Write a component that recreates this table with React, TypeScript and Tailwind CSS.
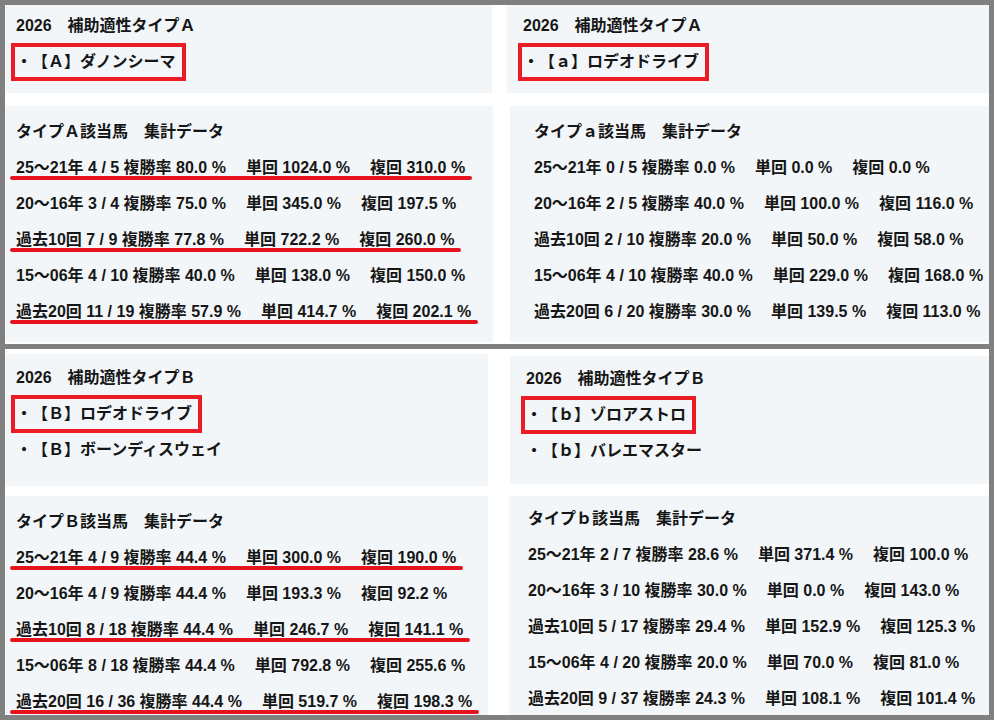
import type { ReactNode } from "react";

// One row of the aggregate table: [period + hits + rate, win return, place return, marked]
type Row = [string, string, string, boolean?];

const ROWS_A: Row[] = [
  ["25～21年 4 / 5 複勝率 80.0 %", "単回 1024.0 %", "複回 310.0 %", true],
  ["20～16年 3 / 4 複勝率 75.0 %", "単回 345.0 %", "複回 197.5 %"],
  ["過去10回 7 / 9 複勝率 77.8 %", "単回 722.2 %", "複回 260.0 %", true],
  ["15～06年 4 / 10 複勝率 40.0 %", "単回 138.0 %", "複回 150.0 %"],
  ["過去20回 11 / 19 複勝率 57.9 %", "単回 414.7 %", "複回 202.1 %", true],
];

const ROWS_A_SMALL: Row[] = [
  ["25～21年 0 / 5 複勝率 0.0 %", "単回 0.0 %", "複回 0.0 %"],
  ["20～16年 2 / 5 複勝率 40.0 %", "単回 100.0 %", "複回 116.0 %"],
  ["過去10回 2 / 10 複勝率 20.0 %", "単回 50.0 %", "複回 58.0 %"],
  ["15～06年 4 / 10 複勝率 40.0 %", "単回 229.0 %", "複回 168.0 %"],
  ["過去20回 6 / 20 複勝率 30.0 %", "単回 139.5 %", "複回 113.0 %"],
];

const ROWS_B: Row[] = [
  ["25～21年 4 / 9 複勝率 44.4 %", "単回 300.0 %", "複回 190.0 %", true],
  ["20～16年 4 / 9 複勝率 44.4 %", "単回 193.3 %", "複回 92.2 %"],
  ["過去10回 8 / 18 複勝率 44.4 %", "単回 246.7 %", "複回 141.1 %", true],
  ["15～06年 8 / 18 複勝率 44.4 %", "単回 792.8 %", "複回 255.6 %"],
  ["過去20回 16 / 36 複勝率 44.4 %", "単回 519.7 %", "複回 198.3 %", true],
];

const ROWS_B_SMALL: Row[] = [
  ["25～21年 2 / 7 複勝率 28.6 %", "単回 371.4 %", "複回 100.0 %"],
  ["20～16年 3 / 10 複勝率 30.0 %", "単回 0.0 %", "複回 143.0 %"],
  ["過去10回 5 / 17 複勝率 29.4 %", "単回 152.9 %", "複回 125.3 %"],
  ["15～06年 4 / 20 複勝率 20.0 %", "単回 70.0 %", "複回 81.0 %"],
  ["過去20回 9 / 37 複勝率 24.3 %", "単回 108.1 %", "複回 101.4 %"],
];

function Line({ children }: { children: ReactNode }) {
  return <div className="h-[36px] whitespace-nowrap leading-[36px]">{children}</div>;
}

// Horse name, optionally boxed in red
function Horse({ name, boxed }: { name: string; boxed?: boolean }) {
  return (
    <div className="flex h-[36px] items-center whitespace-nowrap">
      {boxed ? (
        <span className="-ml-[5px] h-[38px] border-4 border-[#ec1c24] pl-[1px] pr-[6px] leading-[30px]">{name}</span>
      ) : (
        <span>{name}</span>
      )}
    </div>
  );
}

function DataRow({ row }: { row: Row }) {
  const [head, win, place, marked] = row;
  return (
    <Line>
      <span className="relative inline-block h-[36px]">
        <span>{head}</span>
        <span className="ml-[20px]">{win}</span>
        <span className="ml-[20px]">{place}</span>
        {marked && <span className="absolute -left-[6px] -right-[7px] top-[26px] h-[4px] rounded-full bg-[#e5131d]" />}
      </span>
    </Line>
  );
}

function DataPanel({ title, rows, className }: { title: string; rows: Row[]; className: string }) {
  return (
    <div className={`overflow-hidden bg-[#f3f6f9] ${className}`}>
      <Line>{title}</Line>
      {rows.map((r, i) => (
        <DataRow key={i} row={r} />
      ))}
    </div>
  );
}

export default function App() {
  return (
    <div
      className="h-[723px] w-[997px] overflow-hidden bg-white text-[16px] font-bold text-[#161616] [text-spacing-trim:space-all]"
      style={{ fontFamily: '"Liberation Sans", "Noto Sans CJK JP", sans-serif' }}
    >
      <div className="w-[994px]">
        {/* first capture: type A */}
        <div className="h-[349px] border-x-[5px] border-y-[5px] border-[#808080] pl-[1px]">
          <div className="flex h-[88px]">
            <div className="w-[486px] bg-[#f3f6f9] pl-[10px] pt-[3px]">
              <Line>2026　補助適性タイプＡ</Line>
              <Horse name="・【Ａ】ダノンシーマ" boxed />
            </div>
            <div className="ml-[15px] flex-1 bg-[#f3f6f9] pl-[16px] pt-[3px]">
              <Line>2026　補助適性タイプＡ</Line>
              <Horse name="・【ａ】ロデオドライブ" boxed />
            </div>
          </div>
          <div className="mt-[13px] flex h-[236px]">
            <DataPanel title="タイプＡ該当馬　集計データ" rows={ROWS_A} className="w-[487px] pl-[10px] pt-[8px]" />
            <DataPanel title="タイプａ該当馬　集計データ" rows={ROWS_A_SMALL} className="ml-[17px] flex-1 pl-[24px] pt-[8px]" />
          </div>
        </div>

        {/* second capture: type B */}
        <div className="h-[371px] border-x-[5px] border-b-[5px] border-[#808080] pl-[1px] pt-[5px]">
          <div className="flex h-[132px]">
            <div className="w-[482px] bg-[#f3f6f9] pl-[10px] pt-[6px]">
              <Line>2026　補助適性タイプＢ</Line>
              <Horse name="・【Ｂ】ロデオドライブ" boxed />
              <Horse name="・【Ｂ】ボーンディスウェイ" />
            </div>
            <div className="ml-[22px] mt-[2px] h-[128px] flex-1 bg-[#f3f6f9] pl-[16px] pt-[5px]">
              <Line>2026　補助適性タイプＢ</Line>
              <Horse name="・【ｂ】ゾロアストロ" boxed />
              <Horse name="・【ｂ】バレエマスター" />
            </div>
          </div>
          <div className="mt-[10px] flex h-[219px]">
            <DataPanel title="タイプＢ該当馬　集計データ" rows={ROWS_B} className="w-[482px] pl-[10px] pt-[8px]" />
            <DataPanel title="タイプｂ該当馬　集計データ" rows={ROWS_B_SMALL} className="ml-[21px] flex-1 pl-[19px] pt-[5px]" />
          </div>
        </div>
      </div>
    </div>
  );
}
